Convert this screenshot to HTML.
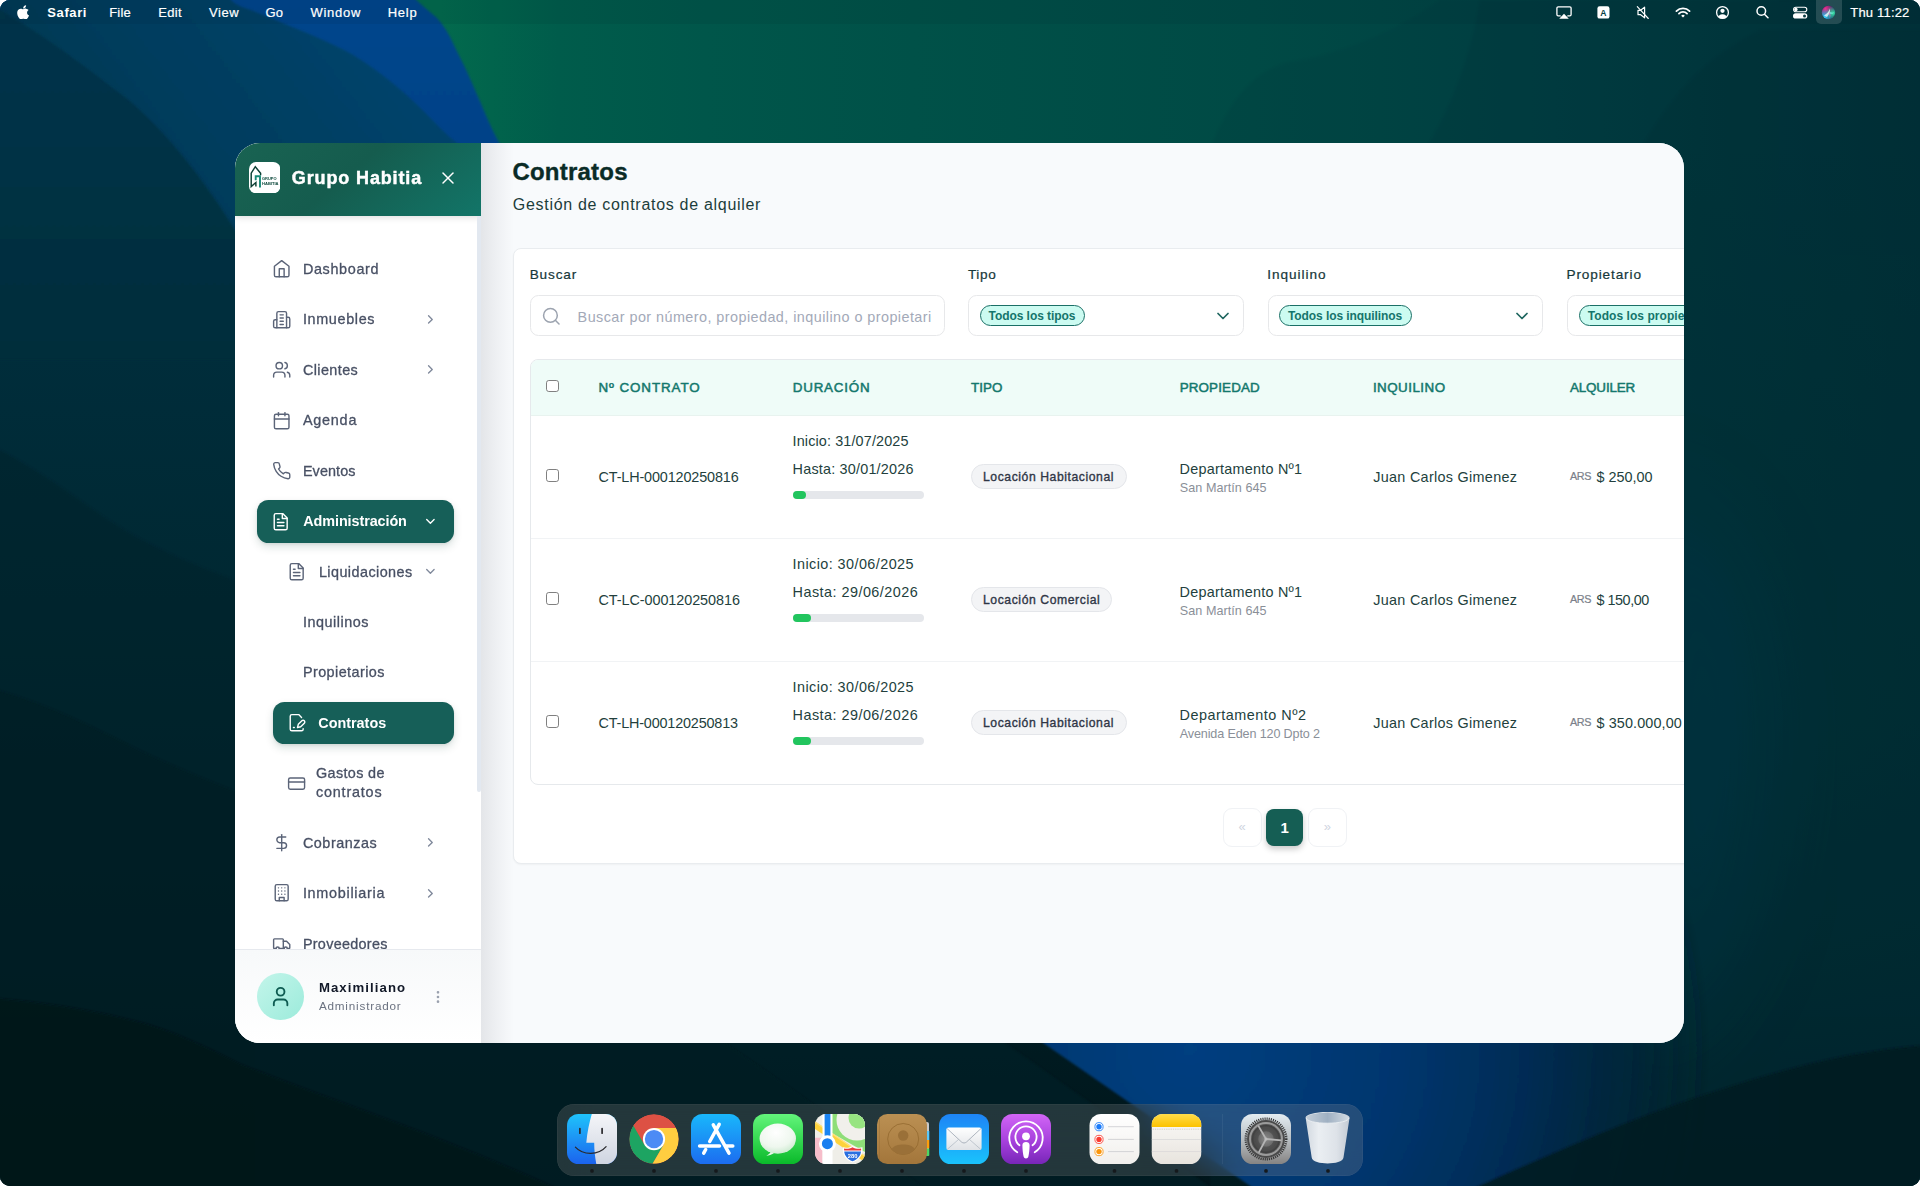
<!DOCTYPE html>
<html lang="es">
<head>
<meta charset="utf-8">
<title>Contratos - Grupo Habitia</title>
<style>
*{box-sizing:border-box;margin:0;padding:0}
html,body{width:1920px;height:1186px;overflow:hidden;background:#fff}
body{font-family:"Liberation Sans",sans-serif;-webkit-font-smoothing:antialiased}
#desk{position:absolute;left:0;top:0;width:1920px;height:1186px;overflow:hidden;border-radius:10px;background:#00252d}
#wall{position:absolute;left:0;top:0;width:1920px;height:1186px;display:block}
.abs{position:absolute}
/* ---------- menu bar ---------- */
#menubar{position:absolute;left:0;top:0;width:1920px;height:24px;background:rgba(0,20,30,.07);color:#fff;font-size:13px}
#menubar span.m{position:absolute;top:0;height:24px;line-height:25px;white-space:nowrap;font-weight:400;letter-spacing:.1px}
#menubar svg{position:absolute}
/* ---------- window ---------- */
#win{position:absolute;left:235px;top:143px;width:1449px;height:900px;border-radius:25px;overflow:hidden;background:#f8fafc}
/* ---------- dock ---------- */
#dock{position:absolute;left:557px;top:1104px;width:806px;height:72px;border-radius:17px;background:rgba(175,165,160,.20);-webkit-backdrop-filter:blur(18px);backdrop-filter:blur(18px);box-shadow:inset 0 0 0 .5px rgba(255,255,255,.08)}

.t{position:absolute;white-space:nowrap;display:block;font-weight:400;text-decoration:none;margin:0}
/* sidebar */
#side{position:absolute;left:0;top:0;width:246px;height:900px;background:#fff;overflow:hidden;z-index:2;opacity:.999}
#shead{position:absolute;left:0;top:0;width:246px;height:73px;background:linear-gradient(140deg,#196352 0%,#155c4e 45%,#127568 100%);box-shadow:0 2px 6px rgba(0,0,0,.12)}
#side nav{position:absolute;left:0;top:0;width:246px;height:807px;overflow:hidden}
#side .act{border-radius:11.5px;background:#165f58;box-shadow:0 4px 8px rgba(10,60,50,.15),0 1px 3px rgba(0,0,0,.08)}
#sfoot{position:absolute;left:0;top:806px;width:246px;height:94px;border-top:1px solid #e6e9ee;background:linear-gradient(180deg,#f7f9fa,#ffffff)}
/* main */
#main{position:absolute;left:0;top:0;width:1449px;height:900px;background:#f8fafc;overflow:hidden}
#mshadow{position:absolute;left:246px;top:0;width:33px;height:900px;background:linear-gradient(90deg,rgba(10,12,30,.088),rgba(10,12,30,.045) 45%,rgba(10,12,30,0))}
#card{position:absolute;left:278px;top:105px;width:1545px;height:615.5px;border:1px solid #e9ecef;border-radius:8px;background:#fff;box-shadow:0 1px 2px rgba(0,0,0,.04)}
#tbl{width:1511px;height:426px;border:1px solid #e6e9ec;border-radius:8px;overflow:hidden;background:#fff}
#thead{position:absolute;left:0;top:0;width:1511px;height:55.5px;background:#effcf8;border-bottom:1px solid #e8f3ef}
</style>
</head>
<body>
<div id="desk">
<svg id="wall" width="1920" height="1186" viewBox="0 0 1920 1186">
<defs>
<linearGradient id="gBase" x1="0" y1="0" x2="0" y2="1186" gradientUnits="userSpaceOnUse">
<stop offset="0" stop-color="#00344b"/><stop offset=".12" stop-color="#003246"/><stop offset=".3" stop-color="#002d3b"/><stop offset=".55" stop-color="#002730"/><stop offset=".8" stop-color="#001e25"/><stop offset="1" stop-color="#00151a"/>
</linearGradient>
<linearGradient id="gGreen" x1="440" y1="0" x2="1920" y2="0" gradientUnits="userSpaceOnUse">
<stop offset="0" stop-color="#036a4d"/><stop offset=".035" stop-color="#01644c"/><stop offset=".08" stop-color="#005c4b"/><stop offset=".18" stop-color="#00564a"/><stop offset=".32" stop-color="#005148"/><stop offset=".55" stop-color="#004a45"/><stop offset=".72" stop-color="#004243"/><stop offset=".85" stop-color="#003a3f"/><stop offset="1" stop-color="#003238"/>
</linearGradient>
<linearGradient id="gRightV" x1="0" y1="0" x2="0" y2="1">
<stop offset="0" stop-color="#00262c" stop-opacity="0"/><stop offset=".12" stop-color="#00262c" stop-opacity="0"/><stop offset=".6" stop-color="#00262c" stop-opacity=".5"/><stop offset=".86" stop-color="#00222a" stop-opacity=".9"/><stop offset="1" stop-color="#001c22" stop-opacity="1"/>
</linearGradient>
<linearGradient id="gBlueTop" x1="0" y1="0" x2="0" y2="150" gradientUnits="userSpaceOnUse">
<stop offset="0" stop-color="#03458c"/><stop offset="1" stop-color="#034388"/>
</linearGradient>
<linearGradient id="gMid" x1="90" y1="190" x2="330" y2="10" gradientUnits="userSpaceOnUse">
<stop offset="0" stop-color="#003852"/><stop offset=".45" stop-color="#013d5e"/><stop offset="1" stop-color="#01436a"/>
</linearGradient>
<radialGradient id="gBlueBot" cx="1190" cy="1050" r="520" gradientUnits="userSpaceOnUse">
<stop offset="0" stop-color="#023f80"/><stop offset=".4" stop-color="#02366e"/><stop offset=".65" stop-color="#012c54"/><stop offset=".85" stop-color="#01253c" stop-opacity=".75"/><stop offset="1" stop-color="#00222c" stop-opacity="0"/>
</radialGradient>
<radialGradient id="gGlow" cx="520" cy="130" r="260" gradientUnits="userSpaceOnUse">
<stop offset="0" stop-color="#036c4c" stop-opacity=".9"/><stop offset="1" stop-color="#036c4c" stop-opacity="0"/>
</radialGradient>
<filter id="b2" x="-5%" y="-5%" width="110%" height="110%"><feGaussianBlur stdDeviation="1"/></filter>
<filter id="b30" x="-50%" y="-50%" width="200%" height="200%"><feGaussianBlur stdDeviation="40"/></filter>
</defs>
<rect width="1920" height="1186" fill="url(#gBase)"/>
<!-- green / teal field (top + right) -->
<path d="M400 -10H1930V1200H1500V300H400Z" fill="url(#gGreen)"/>

<rect x="1500" y="0" width="430" height="1200" fill="url(#gRightV)"/>
<path d="M1640 480C1760 520 1800 700 1750 900C1730 980 1700 1010 1640 1060Z" fill="#003c55" opacity=".5" filter="url(#b30)"/>
<!-- subtle shapes top right -->
<path d="M1210 150C1225 110 1250 70 1290 62C1340 55 1400 30 1440 0H1930V1200H1210Z" fill="#00343c" opacity=".16" filter="url(#b2)"/>
<path d="M1425 150C1450 110 1470 60 1480 0H1930V1200H1425Z" fill="#002f38" opacity=".2" filter="url(#b2)"/>
<path d="M1600 1200C1600 700 1590 300 1640 150C1670 100 1700 60 1760 30H1930V1200Z" fill="#002a32" opacity=".22" filter="url(#b2)"/>
<!-- top-left layers -->
<path d="M-10 -10H406C420 4 430 12 437 18C444 26 449 34 453 43C458 54 463 63 468 74C474 88 480 101 485 113C490 125 495 135 501 146C512 170 530 210 560 300V330H-10Z" fill="url(#gBlueTop)" filter="url(#b2)"/>
<path d="M-10 -10H225C230 2 236 4 242 7C260 13 276 20 292 27C310 34 326 41 342 49C356 56 369 65 381 74C392 82 402 91 412 100C422 109 431 119 440 128C446 134 452 139 458 144C480 170 520 230 560 330H-10Z" fill="url(#gMid)" filter="url(#b2)"/>
<path d="M-10 4C22 21 72 56 114 89C150 114 195 165 235 230C260 270 290 310 330 360H-10Z" fill="url(#gBase)" filter="url(#b2)"/>
<!-- left waves -->
<path d="M-10 445C40 470 75 498 110 521C150 547 195 566 250 586C500 680 800 900 1300 1250H-10Z" fill="#00232b" opacity=".5" filter="url(#b2)"/>
<path d="M-10 688C45 704 80 721 118 740C160 761 200 778 250 797C450 870 700 1000 1000 1250H-10Z" fill="#001a20" opacity=".55" filter="url(#b2)"/>
<path d="M-10 998C50 1003 95 1011 135 1021C175 1031 210 1049 240 1064C330 1100 440 1135 560 1190H-10Z" fill="#001216" opacity=".7" filter="url(#b2)"/>
<!-- bottom band -->
<path d="M1036 1038L1256 1190H1930V900H1500V1038Z" fill="url(#gBlueBot)" filter="url(#b2)"/>
<path d="M1470 1190C1560 1150 1640 1115 1720 1090C1800 1064 1860 1050 1930 1045V1190Z" fill="#001a20" opacity=".9" filter="url(#b2)"/>
</svg>

<div id="menubar">
<svg class="abs" style="left:17.4px;top:4.6px" width="12.2" height="14.6" viewBox="0 24 384 464"><path fill="#fff" d="M318.7 268.7c-.2-36.700 16.400-64.400 50-84.800-18.800-26.900-47.200-41.700-84.700-44.600-35.500-2.800-74.300 20.700-88.500 20.700-15 0-49.400-19.700-76.400-19.700C63.300 141.200 4 184.800 4 273.500q0 39.300 14.400 81.200c12.800 36.700 59 126.700 107.200 125.200 25.200-.6 43-17.900 75.800-17.900 31.800 0 48.300 17.900 76.400 17.900 48.600-.7 90.400-82.500 102.600-119.300-65.200-30.700-61.700-90-61.700-91.900zm-56.600-164.200c27.300-32.400 24.800-61.900 24-72.500-24.100 1.400-52 16.400-67.900 34.900-17.500 19.800-27.800 44.300-25.600 71.900 26.100 2 49.900-11.400 69.500-34.300z"/></svg>
<span class="t" style="left:47.3px;top:4px;font-size:13px;line-height:17px;color:#fff;font-weight:700;letter-spacing:0.61px;">Safari</span>
<span class="t" style="left:109.2px;top:4px;font-size:13px;line-height:17px;color:#fff;letter-spacing:0.18px;-webkit-text-stroke:.2px #fff;">File</span>
<span class="t" style="left:158.2px;top:4px;font-size:13px;line-height:17px;color:#fff;letter-spacing:0.36px;-webkit-text-stroke:.2px #fff;">Edit</span>
<span class="t" style="left:208.9px;top:4px;font-size:13px;line-height:17px;color:#fff;letter-spacing:0.62px;-webkit-text-stroke:.2px #fff;">View</span>
<span class="t" style="left:265.4px;top:4px;font-size:13px;line-height:17px;color:#fff;letter-spacing:0.36px;-webkit-text-stroke:.2px #fff;">Go</span>
<span class="t" style="left:310.4px;top:4px;font-size:13px;line-height:17px;color:#fff;letter-spacing:0.75px;-webkit-text-stroke:.2px #fff;">Window</span>
<span class="t" style="left:387.7px;top:4px;font-size:13px;line-height:17px;color:#fff;letter-spacing:0.75px;-webkit-text-stroke:.2px #fff;">Help</span>
<span class="t" style="left:1850.3px;top:4px;font-size:13px;line-height:17px;color:#fff;letter-spacing:0.18px;-webkit-text-stroke:.2px #fff;">Thu 11:22</span>
<svg class="abs" style="left:1555px;top:5px" width="18" height="15" viewBox="0 0 18 15" fill="none"><path d="M5.2 10.9H3.2A1.3 1.3 0 0 1 1.9 9.600V3.100A1.300 1.300 0 0 1 3.200 1.800H14.800A1.300 1.300 0 0 1 16.100 3.100V9.600A1.300 1.300 0 0 1 14.800 10.900H12.800" stroke="#fff" stroke-width="1.3" stroke-linecap="round"/><path d="M9 8.700 13.800 13.800H4.200Z" fill="#fff"/></svg>
<svg class="abs" style="left:1596.5px;top:5.800px" width="13" height="13" viewBox="0 0 13 13"><rect x=".4" y=".3" width="12.100" height="12.300" rx="2.200" fill="#fff"/><text x="6.45" y="9.800" text-anchor="middle" font-family="Liberation Sans, sans-serif" font-weight="700" font-size="8.600" fill="#063f46">A</text></svg>
<svg class="abs" style="left:1635px;top:5px" width="16" height="15" viewBox="0 0 16 15" fill="none" stroke="#fff" stroke-linejoin="round" stroke-linecap="round"><path d="M9.600 2.200 5.600 5.300H3v4.400h2.600l4 3.100Z" stroke-width="1.200"/><path d="M2.300 1.700 13.300 13.500" stroke-width="1.100"/></svg>
<svg class="abs" style="left:1675.2px;top:6.700px" width="16" height="11.300" viewBox="0 0 17 12" fill="none" stroke="#fff" stroke-width="1.900" stroke-linecap="round"><path d="M1.500 4.300A10 10 0 0 1 15.500 4.300"/><path d="M4.200 7A6.200 6.200 0 0 1 12.800 7"/><path d="M8.500 11.200 6.600 9.300A2.700 2.700 0 0 1 10.400 9.300Z" fill="#fff" stroke="none"/></svg>
<svg class="abs" style="left:1714.700px;top:5px" width="15" height="15" viewBox="0 0 15 15" fill="none"><defs><clipPath id="ucl"><circle cx="7.500" cy="7.500" r="5.900"/></clipPath></defs><circle cx="7.500" cy="7.500" r="5.900" stroke="#fff" stroke-width="1.300"/><circle cx="7.500" cy="5.800" r="2.150" fill="#fff"/><ellipse cx="7.500" cy="13" rx="4.700" ry="3.700" fill="#fff" clip-path="url(#ucl)"/></svg>
<svg class="abs" style="left:1754.800px;top:4.900px" width="15" height="15" viewBox="0 0 15 15" fill="none" stroke="#fff" stroke-width="1.500" stroke-linecap="round"><circle cx="6.300" cy="6" r="4.300"/><path d="M9.500 9.200 13 12.700"/></svg>
<svg class="abs" style="left:1792px;top:5.500px" width="16" height="14" viewBox="0 0 16 14" fill="none"><rect x="1.600" y="1.300" width="13.200" height="4.500" rx="2.250" stroke="#fff" stroke-width="1.100"/><circle cx="3.900" cy="3.550" r="1.700" fill="#fff"/><rect x="1" y="7.300" width="14.300" height="5.300" rx="2.650" fill="#fff"/><circle cx="12.500" cy="9.950" r="1.500" fill="#0b3b42"/></svg>
<div class="abs" style="left:1816px;top:0;width:26px;height:23.500px;border-radius:0 0 5px 5px;background:rgba(255,255,255,.14)"></div>
<svg class="abs" style="left:1821px;top:4.600px" width="15" height="15" viewBox="0 0 15 15"><defs><radialGradient id="si1" cx=".3" cy=".25" r=".6"><stop offset="0" stop-color="#f0308f"/><stop offset="1" stop-color="#ff3fa0" stop-opacity="0"/></radialGradient><radialGradient id="si2" cx=".25" cy=".8" r=".55"><stop offset="0" stop-color="#35d6ff"/><stop offset="1" stop-color="#35d6ff" stop-opacity="0"/></radialGradient><radialGradient id="si3" cx=".8" cy=".55" r=".5"><stop offset="0" stop-color="#38e6a6"/><stop offset="1" stop-color="#38e6a6" stop-opacity="0"/></radialGradient><clipPath id="sic"><circle cx="7.500" cy="7.500" r="6.700"/></clipPath></defs><circle cx="7.500" cy="7.500" r="6.700" fill="#1a1a55"/><g clip-path="url(#sic)"><rect width="15" height="15" fill="url(#si1)"/><rect width="15" height="15" fill="url(#si2)"/><rect width="15" height="15" fill="url(#si3)"/><path d="M3 10.500C6 8.500 8 6.500 9 3.500C9.300 6.500 8.500 9 6 12Z" fill="#fff" opacity=".75"/><path d="M8.500 7C10 7.500 11.500 8 13 7.600C11.500 8.800 10 9 8.500 8.500Z" fill="#9ff" opacity=".7"/><path d="M7.700 8C8.500 10 9 11.500 8.600 13.500C9.800 11.500 9.500 9.500 8.800 7.800Z" fill="#f6c" opacity=".7"/></g></svg>
</div>

<div id="win">
<aside id="side">
<div id="shead"></div>
<svg class="abs" style="left:14px;top:19px" width="31.4" height="31.4" viewBox="0 0 31.4 31.4"><rect width="31.4" height="31.4" rx="7.200" fill="#fff"/><path d="M11.600 13.300V11.200L6.300 4.700 2.200 11.200V24.600L6.900 20.500V24.600" fill="none" stroke="#0c3f34" stroke-width="1.450" stroke-linejoin="miter"/><path d="M6.700 18.200V14.300H11V25.500" fill="none" stroke="#1a8a78" stroke-width="1.900"/><text x="13" y="17.750" font-family="Liberation Sans, sans-serif" font-weight="700" font-size="3.500" fill="#0e4a3d" textLength="14.600" lengthAdjust="spacingAndGlyphs">GRUPO</text><text x="13" y="23" font-family="Liberation Sans, sans-serif" font-weight="700" font-size="3.600" fill="#0e4a3d" textLength="16.600" lengthAdjust="spacingAndGlyphs">HABITIA</text></svg>
<div class="t" style="left:56.8px;top:24px;font-size:18px;line-height:23px;color:#fff;font-weight:700;letter-spacing:0.87px;-webkit-text-stroke:.45px #fff;">Grupo Habitia</div>
<svg class="abs" style="left:203.1px;top:24.5px" width="20" height="20" viewBox="0 0 24 24" fill="none" stroke="#fff" stroke-width="1.8" stroke-linecap="round" stroke-linejoin="round"><path d="M18 6 6 18"/><path d="m6 6 12 12"/></svg>
<nav>
<div class="abs" style="left:242.100px;top:73px;width:3.900px;height:576.300px;background:#e2e8f0;border-radius:0 0 2px 2px"></div>
<div class="abs act" style="left:22px;top:357px;width:197px;height:42.800px"></div>
<div class="abs act" style="left:37.500px;top:559px;width:181.500px;height:42.300px"></div>
<svg class="abs" style="left:36.7px;top:116.2px" width="19.4" height="19.4" viewBox="0 0 24 24" fill="none" stroke="#5b6478" stroke-width="1.75" stroke-linecap="round" stroke-linejoin="round"><path d="m3 9 9-7 9 7v11a2 2 0 0 1-2 2H5a2 2 0 0 1-2-2z"/><polyline points="9 22 9 12 15 12 15 22"/></svg>
<a class="t" style="left:67.9px;top:117px;font-size:14.4px;line-height:19px;color:#485064;letter-spacing:0.65px;-webkit-text-stroke:.3px #485064;">Dashboard</a>
<svg class="abs" style="left:36.7px;top:166.6px" width="19.4" height="19.4" viewBox="0 0 24 24" fill="none" stroke="#5b6478" stroke-width="1.75" stroke-linecap="round" stroke-linejoin="round"><path d="M6 22V4a2 2 0 0 1 2-2h8a2 2 0 0 1 2 2v18Z"/><path d="M6 12H4a2 2 0 0 0-2 2v6a2 2 0 0 0 2 2h2"/><path d="M18 9h2a2 2 0 0 1 2 2v9a2 2 0 0 1-2 2h-2"/><path d="M10 6h4"/><path d="M10 10h4"/><path d="M10 14h4"/><path d="M10 18h4"/></svg>
<a class="t" style="left:67.9px;top:167px;font-size:14.4px;line-height:19px;color:#485064;letter-spacing:0.65px;-webkit-text-stroke:.3px #485064;">Inmuebles</a>
<svg class="abs" style="left:188.1px;top:168.9px" width="14.8" height="14.8" viewBox="0 0 24 24" fill="none" stroke="#818a9c" stroke-width="2.2" stroke-linecap="round" stroke-linejoin="round"><path d="m9 18 6-6-6-6"/></svg>
<svg class="abs" style="left:36.7px;top:217.1px" width="19.4" height="19.4" viewBox="0 0 24 24" fill="none" stroke="#5b6478" stroke-width="1.75" stroke-linecap="round" stroke-linejoin="round"><path d="M16 21v-2a4 4 0 0 0-4-4H6a4 4 0 0 0-4 4v2"/><circle cx="9" cy="7" r="4"/><path d="M22 21v-2a4 4 0 0 0-3-3.87"/><path d="M16 3.13a4 4 0 0 1 0 7.75"/></svg>
<a class="t" style="left:67.9px;top:218px;font-size:14.4px;line-height:19px;color:#485064;letter-spacing:0.41px;-webkit-text-stroke:.3px #485064;">Clientes</a>
<svg class="abs" style="left:188.1px;top:219.4px" width="14.8" height="14.8" viewBox="0 0 24 24" fill="none" stroke="#818a9c" stroke-width="2.2" stroke-linecap="round" stroke-linejoin="round"><path d="m9 18 6-6-6-6"/></svg>
<svg class="abs" style="left:36.7px;top:267.6px" width="19.4" height="19.4" viewBox="0 0 24 24" fill="none" stroke="#5b6478" stroke-width="1.75" stroke-linecap="round" stroke-linejoin="round"><rect width="18" height="18" x="3" y="4" rx="2" ry="2"/><line x1="16" x2="16" y1="2" y2="6"/><line x1="8" x2="8" y1="2" y2="6"/><line x1="3" x2="21" y1="10" y2="10"/></svg>
<a class="t" style="left:67.9px;top:268px;font-size:14.4px;line-height:19px;color:#485064;letter-spacing:0.78px;-webkit-text-stroke:.3px #485064;">Agenda</a>
<svg class="abs" style="left:36.7px;top:318.1px" width="19.4" height="19.4" viewBox="0 0 24 24" fill="none" stroke="#5b6478" stroke-width="1.75" stroke-linecap="round" stroke-linejoin="round"><path d="M22 16.92v3a2 2 0 0 1-2.18 2 19.79 19.79 0 0 1-8.63-3.07 19.5 19.5 0 0 1-6-6 19.79 19.79 0 0 1-3.07-8.67A2 2 0 0 1 4.11 2h3a2 2 0 0 1 2 1.72 12.84 12.84 0 0 0 .7 2.81 2 2 0 0 1-.45 2.11L8.09 9.91a16 16 0 0 0 6 6l1.27-1.27a2 2 0 0 1 2.11-.45 12.84 12.84 0 0 0 2.81.7A2 2 0 0 1 22 16.92z"/></svg>
<a class="t" style="left:67.9px;top:319px;font-size:14.4px;line-height:19px;color:#485064;letter-spacing:0.10px;-webkit-text-stroke:.3px #485064;">Eventos</a>
<svg class="abs" style="left:36.2px;top:368.5px" width="19.4" height="19.4" viewBox="0 0 24 24" fill="none" stroke="#fff" stroke-width="1.75" stroke-linecap="round" stroke-linejoin="round"><path d="M14.5 2H6a2 2 0 0 0-2 2v16a2 2 0 0 0 2 2h12a2 2 0 0 0 2-2V7.5L14.5 2z"/><polyline points="14 2 14 8 20 8"/><line x1="16" x2="8" y1="13" y2="13"/><line x1="16" x2="8" y1="17" y2="17"/><line x1="10" x2="8" y1="9" y2="9"/></svg>
<a class="t" style="left:68.3px;top:369px;font-size:14.4px;line-height:19px;color:#fff;font-weight:700;letter-spacing:-0.09px;">Administración</a>
<svg class="abs" style="left:188.1px;top:370.8px" width="14.8" height="14.8" viewBox="0 0 24 24" fill="none" stroke="#fff" stroke-width="2.2" stroke-linecap="round" stroke-linejoin="round"><path d="m6 9 6 6 6-6"/></svg>
<svg class="abs" style="left:52.3px;top:418.9px" width="19.4" height="19.4" viewBox="0 0 24 24" fill="none" stroke="#5b6478" stroke-width="1.75" stroke-linecap="round" stroke-linejoin="round"><path d="M14.5 2H6a2 2 0 0 0-2 2v16a2 2 0 0 0 2 2h12a2 2 0 0 0 2-2V7.5L14.5 2z"/><polyline points="14 2 14 8 20 8"/><line x1="16" x2="8" y1="13" y2="13"/><line x1="16" x2="8" y1="17" y2="17"/><line x1="10" x2="8" y1="9" y2="9"/></svg>
<a class="t" style="left:83.9px;top:420px;font-size:14.4px;line-height:19px;color:#485064;letter-spacing:0.44px;-webkit-text-stroke:.3px #485064;">Liquidaciones</a>
<svg class="abs" style="left:188.1px;top:421.2px" width="14.8" height="14.8" viewBox="0 0 24 24" fill="none" stroke="#818a9c" stroke-width="2.2" stroke-linecap="round" stroke-linejoin="round"><path d="m6 9 6 6 6-6"/></svg>
<a class="t" style="left:67.9px;top:470px;font-size:14.4px;line-height:19px;color:#485064;letter-spacing:0.53px;-webkit-text-stroke:.3px #485064;">Inquilinos</a>
<a class="t" style="left:67.9px;top:520px;font-size:14.4px;line-height:19px;color:#485064;letter-spacing:0.43px;-webkit-text-stroke:.3px #485064;">Propietarios</a>
<svg class="abs" style="left:52.3px;top:570.2px" width="19.4" height="19.4" viewBox="0 0 24 24" fill="none" stroke="#fff" stroke-width="1.75" stroke-linecap="round" stroke-linejoin="round"><path d="M20 19.5v.5a2 2 0 0 1-2 2H6a2 2 0 0 1-2-2V4a2 2 0 0 1 2-2h8.5L18 5.5"/><path d="M8 18h1"/><path d="M18.42 9.61a2.1 2.1 0 1 1 2.97 2.97L16.95 17 13 18l.99-3.95 4.43-4.44Z"/></svg>
<a class="t" style="left:83.3px;top:571px;font-size:14.4px;line-height:19px;color:#fff;font-weight:700;letter-spacing:-0.01px;">Contratos</a>
<svg class="abs" style="left:36.7px;top:689.8px" width="19.4" height="19.4" viewBox="0 0 24 24" fill="none" stroke="#5b6478" stroke-width="1.75" stroke-linecap="round" stroke-linejoin="round"><line x1="12" x2="12" y1="2" y2="22"/><path d="M17 5H9.5a3.5 3.5 0 0 0 0 7h5a3.5 3.5 0 0 1 0 7H6"/></svg>
<a class="t" style="left:67.9px;top:691px;font-size:14.4px;line-height:19px;color:#485064;letter-spacing:0.54px;-webkit-text-stroke:.3px #485064;">Cobranzas</a>
<svg class="abs" style="left:188.1px;top:692.1px" width="14.8" height="14.8" viewBox="0 0 24 24" fill="none" stroke="#818a9c" stroke-width="2.2" stroke-linecap="round" stroke-linejoin="round"><path d="m9 18 6-6-6-6"/></svg>
<svg class="abs" style="left:36.7px;top:740.3px" width="19.4" height="19.4" viewBox="0 0 24 24" fill="none" stroke="#5b6478" stroke-width="1.75" stroke-linecap="round" stroke-linejoin="round"><rect width="16" height="20" x="4" y="2" rx="2" ry="2"/><path d="M9 22v-4h6v4"/><path d="M8 6h.01"/><path d="M16 6h.01"/><path d="M12 6h.01"/><path d="M12 10h.01"/><path d="M12 14h.01"/><path d="M16 10h.01"/><path d="M16 14h.01"/><path d="M8 10h.01"/><path d="M8 14h.01"/></svg>
<a class="t" style="left:67.9px;top:741px;font-size:14.4px;line-height:19px;color:#485064;letter-spacing:0.72px;-webkit-text-stroke:.3px #485064;">Inmobiliaria</a>
<svg class="abs" style="left:188.1px;top:742.6px" width="14.8" height="14.8" viewBox="0 0 24 24" fill="none" stroke="#818a9c" stroke-width="2.2" stroke-linecap="round" stroke-linejoin="round"><path d="m9 18 6-6-6-6"/></svg>
<svg class="abs" style="left:36.7px;top:790.7px" width="19.4" height="19.4" viewBox="0 0 24 24" fill="none" stroke="#5b6478" stroke-width="1.75" stroke-linecap="round" stroke-linejoin="round"><path d="M5 18H3c-.6 0-1-.4-1-1V7c0-.6.4-1 1-1h10c.6 0 1 .4 1 1v11"/><path d="M14 9h4l4 4v4c0 .6-.4 1-1 1h-2"/><circle cx="7" cy="18" r="2"/><path d="M15 18H9"/><circle cx="17" cy="18" r="2"/></svg>
<a class="t" style="left:67.9px;top:792px;font-size:14.4px;line-height:19px;color:#485064;letter-spacing:0.29px;-webkit-text-stroke:.3px #485064;">Proveedores</a>
<svg class="abs" style="left:52.1px;top:630.9px" width="19.2" height="19.2" viewBox="0 0 24 24" fill="none" stroke="#5b6478" stroke-width="1.75" stroke-linecap="round" stroke-linejoin="round"><rect width="20" height="14" x="2" y="5" rx="2"/><line x1="2" x2="22" y1="10" y2="10"/></svg>
<a class="t" style="left:81.0px;top:621px;font-size:14.4px;line-height:19px;color:#485064;letter-spacing:0.35px;-webkit-text-stroke:.3px #485064;">Gastos de</a>
<a class="t" style="left:81.0px;top:640px;font-size:14.4px;line-height:19px;color:#485064;letter-spacing:0.80px;-webkit-text-stroke:.3px #485064;">contratos</a>
</nav>
<div id="sfoot"></div>
<div class="abs" style="left:22px;top:830px;width:46.600px;height:46.600px;border-radius:50%;background:linear-gradient(135deg,#c3f5ea,#9cebdb)"></div>
<svg class="abs" style="left:33.5px;top:841.8px" width="23.2" height="23.2" viewBox="0 0 24 24" fill="none" stroke="#0f5c52" stroke-width="1.93" stroke-linecap="round" stroke-linejoin="round"><path d="M19 21v-2a4 4 0 0 0-4-4H9a4 4 0 0 0-4 4v2"/><circle cx="12" cy="7" r="4"/></svg>
<div class="t" style="left:83.9px;top:836px;font-size:13.2px;line-height:17px;color:#111827;font-weight:700;letter-spacing:1.07px;">Maximiliano</div>
<div class="t" style="left:83.9px;top:855px;font-size:11.7px;line-height:15px;color:#6b7280;letter-spacing:0.81px;">Administrador</div>
<svg class="abs" style="left:195.3px;top:845.7px" width="16" height="16" viewBox="0 0 24 24" fill="none" stroke="#9aa1ae" stroke-width="2" stroke-linecap="round" stroke-linejoin="round"><circle cx="12" cy="12" r="1"/><circle cx="12" cy="5" r="1"/><circle cx="12" cy="19" r="1"/></svg>
</aside>

<main id="main">
<div id="mshadow"></div>
<h1 class="t" style="left:277.4px;top:13px;font-size:24px;line-height:31px;color:#0a2b26;font-weight:700;letter-spacing:0.23px;-webkit-text-stroke:.35px #0a2b26;">Contratos</h1>
<p class="t" style="left:277.8px;top:51px;font-size:16px;line-height:21px;color:#1c3d3b;letter-spacing:0.70px;">Gestión de contratos de alquiler</p>
<section id="card">
<label class="t" style="left:15.7px;top:17px;font-size:13.6px;line-height:18px;color:#17383a;letter-spacing:0.86px;-webkit-text-stroke:.22px #17383a;">Buscar</label>
<label class="t" style="left:453.9px;top:17px;font-size:13.6px;line-height:18px;color:#17383a;letter-spacing:0.68px;-webkit-text-stroke:.22px #17383a;">Tipo</label>
<label class="t" style="left:753.3px;top:17px;font-size:13.6px;line-height:18px;color:#17383a;letter-spacing:0.94px;-webkit-text-stroke:.22px #17383a;">Inquilino</label>
<label class="t" style="left:1052.5px;top:17px;font-size:13.6px;line-height:18px;color:#17383a;letter-spacing:0.87px;-webkit-text-stroke:.22px #17383a;">Propietario</label>
<div class="abs inp" style="left:15.8px;top:46.2px;width:414.8px;height:40.5px;border:1px solid #e7e8ea;border-radius:8.5px;background:#fff"></div>
<svg class="abs" style="left:26.7px;top:56.7px" width="20.6" height="20.6" viewBox="0 0 24 24" fill="none" stroke="#9ca3af" stroke-width="1.75" stroke-linecap="round" stroke-linejoin="round"><circle cx="11" cy="11" r="8"/><path d="m21 21-4.3-4.3"/></svg>
<div class="abs" style="left:63.0px;top:51.0px;width:354.5px;height:31.0px;overflow:hidden"><span class="t" style="left:0.6px;top:8px;font-size:14.4px;line-height:19px;color:#a3a9b8;letter-spacing:0.44px;">Buscar por número, propiedad, inquilino o propietario</span></div>
<div class="abs inp" style="left:454.2px;top:46.2px;width:275.6px;height:40.5px;border:1px solid #e7e8ea;border-radius:8.5px;background:#fff"></div>
<div class="abs" style="left:466.0px;top:56.0px;width:105.0px;height:21.2px;border:1.200px solid #1a6f66;border-radius:11px;background:#ccfbf1"></div>
<span class="t" style="left:474.6px;top:59px;font-size:12px;line-height:16px;color:#15756b;font-weight:700;letter-spacing:-0.07px;">Todos los tipos</span>
<svg class="abs" style="left:698.9px;top:56.6px" width="20" height="20" viewBox="0 0 24 24" fill="none" stroke="#1f665f" stroke-width="2.1" stroke-linecap="round" stroke-linejoin="round"><path d="m6 9 6 6 6-6"/></svg>
<div class="abs inp" style="left:753.6px;top:46.2px;width:275.6px;height:40.5px;border:1px solid #e7e8ea;border-radius:8.5px;background:#fff"></div>
<div class="abs" style="left:765.4px;top:56.0px;width:132.5px;height:21.2px;border:1.200px solid #1a6f66;border-radius:11px;background:#ccfbf1"></div>
<span class="t" style="left:774.0px;top:59px;font-size:12px;line-height:16px;color:#15756b;font-weight:700;letter-spacing:-0.08px;">Todos los inquilinos</span>
<svg class="abs" style="left:998.3px;top:56.6px" width="20" height="20" viewBox="0 0 24 24" fill="none" stroke="#1f665f" stroke-width="2.1" stroke-linecap="round" stroke-linejoin="round"><path d="m6 9 6 6 6-6"/></svg>
<div class="abs inp" style="left:1053.4px;top:46.2px;width:275.6px;height:40.5px;border:1px solid #e7e8ea;border-radius:8.5px;background:#fff"></div>
<div class="abs" style="left:1065.2px;top:56.0px;width:147.7px;height:21.2px;border:1.200px solid #1a6f66;border-radius:11px;background:#ccfbf1"></div>
<span class="t" style="left:1073.8px;top:59px;font-size:12px;line-height:16px;color:#15756b;font-weight:700;letter-spacing:0.05px;">Todos los propietarios</span>
<svg class="abs" style="left:1298.1px;top:56.6px" width="20" height="20" viewBox="0 0 24 24" fill="none" stroke="#1f665f" stroke-width="2.1" stroke-linecap="round" stroke-linejoin="round"><path d="m6 9 6 6 6-6"/></svg>
<div id="tbl" class="abs" style="left:16.0px;top:110.0px">
<div id="thead"></div>
</div>
<div class="abs" style="left:32.0px;top:130.5px;width:13.0px;height:12.9px;border:1.150px solid #808080;border-radius:2.800px;background:#fff"></div>
<span class="t" style="left:84.4px;top:130px;font-size:13.4px;line-height:17px;color:#13786d;letter-spacing:0.91px;-webkit-text-stroke:.5px #13786d;">Nº CONTRATO</span>
<span class="t" style="left:278.7px;top:130px;font-size:13.4px;line-height:17px;color:#13786d;letter-spacing:0.80px;-webkit-text-stroke:.5px #13786d;">DURACIÓN</span>
<span class="t" style="left:456.9px;top:130px;font-size:13.4px;line-height:17px;color:#13786d;letter-spacing:0.12px;-webkit-text-stroke:.5px #13786d;">TIPO</span>
<span class="t" style="left:665.7px;top:130px;font-size:13.4px;line-height:17px;color:#13786d;letter-spacing:0.14px;-webkit-text-stroke:.5px #13786d;">PROPIEDAD</span>
<span class="t" style="left:858.9px;top:130px;font-size:13.4px;line-height:17px;color:#13786d;letter-spacing:0.47px;-webkit-text-stroke:.5px #13786d;">INQUILINO</span>
<span class="t" style="left:1055.9px;top:130px;font-size:13.4px;line-height:17px;color:#13786d;letter-spacing:-0.12px;-webkit-text-stroke:.5px #13786d;">ALQUILER</span>
<div class="abs" style="left:32.0px;top:220.0px;width:13.0px;height:12.9px;border:1.150px solid #808080;border-radius:2.800px;background:#fff"></div>
<span class="t" style="left:84.5px;top:219px;font-size:14.4px;line-height:19px;color:#233f3d;letter-spacing:-0.13px;">CT-LH-000120250816</span>
<span class="t" style="left:278.6px;top:183px;font-size:14.4px;line-height:19px;color:#233f3d;letter-spacing:0.13px;">Inicio: 31/07/2025</span>
<span class="t" style="left:278.6px;top:211px;font-size:14.4px;line-height:19px;color:#233f3d;letter-spacing:0.20px;">Hasta: 30/01/2026</span>
<div class="abs" style="left:279.0px;top:241.8px;width:131.2px;height:8.0px;border-radius:4px;background:#e5e7eb"><i style="display:block;width:13px;height:8px;border-radius:4px;background:#22c55e"></i></div>
<div class="abs" style="left:456.8px;top:215.0px;width:156.0px;height:25.0px;border:1px solid #e4e6ea;border-radius:12.5px;background:#f3f4f6"></div>
<span class="t" style="left:469.0px;top:220px;font-size:12.2px;line-height:16px;color:#2f3646;letter-spacing:0.56px;-webkit-text-stroke:.35px #2f3646;">Locación Habitacional</span>
<span class="t" style="left:665.6px;top:211px;font-size:14.4px;line-height:19px;color:#233f3d;letter-spacing:0.24px;">Departamento Nº1</span>
<span class="t" style="left:665.8px;top:231px;font-size:12.6px;line-height:16px;color:#8a8f98;letter-spacing:0.05px;">San Martín 645</span>
<span class="t" style="left:859.2px;top:219px;font-size:14.4px;line-height:19px;color:#233f3d;letter-spacing:0.30px;">Juan Carlos Gimenez</span>
<span class="t" style="left:1056.0px;top:220px;font-size:10.8px;line-height:14px;color:#7b7f8a;letter-spacing:-0.40px;-webkit-text-stroke:.2px #7b7f8a;">ARS</span>
<span class="t" style="left:1082.4px;top:219px;font-size:14.4px;line-height:19px;color:#233f3d;letter-spacing:0.02px;">$ 250,00</span>
<div class="abs" style="left:17.0px;top:288.7px;width:1500.0px;height:1.0px;background:#f1f3f5"></div>
<div class="abs" style="left:32.0px;top:343.0px;width:13.0px;height:12.9px;border:1.150px solid #808080;border-radius:2.800px;background:#fff"></div>
<span class="t" style="left:84.5px;top:342px;font-size:14.4px;line-height:19px;color:#233f3d;letter-spacing:-0.06px;">CT-LC-000120250816</span>
<span class="t" style="left:278.6px;top:306px;font-size:14.4px;line-height:19px;color:#233f3d;letter-spacing:0.43px;">Inicio: 30/06/2025</span>
<span class="t" style="left:278.6px;top:334px;font-size:14.4px;line-height:19px;color:#233f3d;letter-spacing:0.47px;">Hasta: 29/06/2026</span>
<div class="abs" style="left:279.0px;top:364.8px;width:131.2px;height:8.0px;border-radius:4px;background:#e5e7eb"><i style="display:block;width:18px;height:8px;border-radius:4px;background:#22c55e"></i></div>
<div class="abs" style="left:456.8px;top:338.0px;width:141.3px;height:25.0px;border:1px solid #e4e6ea;border-radius:12.5px;background:#f3f4f6"></div>
<span class="t" style="left:469.0px;top:343px;font-size:12.2px;line-height:16px;color:#2f3646;letter-spacing:0.57px;-webkit-text-stroke:.35px #2f3646;">Locación Comercial</span>
<span class="t" style="left:665.6px;top:334px;font-size:14.4px;line-height:19px;color:#233f3d;letter-spacing:0.24px;">Departamento Nº1</span>
<span class="t" style="left:665.8px;top:354px;font-size:12.6px;line-height:16px;color:#8a8f98;letter-spacing:0.05px;">San Martín 645</span>
<span class="t" style="left:859.2px;top:342px;font-size:14.4px;line-height:19px;color:#233f3d;letter-spacing:0.30px;">Juan Carlos Gimenez</span>
<span class="t" style="left:1056.0px;top:343px;font-size:10.8px;line-height:14px;color:#7b7f8a;letter-spacing:-0.40px;-webkit-text-stroke:.2px #7b7f8a;">ARS</span>
<span class="t" style="left:1082.4px;top:342px;font-size:14.4px;line-height:19px;color:#233f3d;letter-spacing:-0.45px;">$ 150,00</span>
<div class="abs" style="left:17.0px;top:411.7px;width:1500.0px;height:1.0px;background:#f1f3f5"></div>
<div class="abs" style="left:32.0px;top:466.0px;width:13.0px;height:12.9px;border:1.150px solid #808080;border-radius:2.800px;background:#fff"></div>
<span class="t" style="left:84.5px;top:465px;font-size:14.4px;line-height:19px;color:#233f3d;letter-spacing:-0.17px;">CT-LH-000120250813</span>
<span class="t" style="left:278.6px;top:429px;font-size:14.4px;line-height:19px;color:#233f3d;letter-spacing:0.43px;">Inicio: 30/06/2025</span>
<span class="t" style="left:278.6px;top:457px;font-size:14.4px;line-height:19px;color:#233f3d;letter-spacing:0.47px;">Hasta: 29/06/2026</span>
<div class="abs" style="left:279.0px;top:487.8px;width:131.2px;height:8.0px;border-radius:4px;background:#e5e7eb"><i style="display:block;width:18px;height:8px;border-radius:4px;background:#22c55e"></i></div>
<div class="abs" style="left:456.8px;top:461.0px;width:156.0px;height:25.0px;border:1px solid #e4e6ea;border-radius:12.5px;background:#f3f4f6"></div>
<span class="t" style="left:469.0px;top:466px;font-size:12.2px;line-height:16px;color:#2f3646;letter-spacing:0.56px;-webkit-text-stroke:.35px #2f3646;">Locación Habitacional</span>
<span class="t" style="left:665.6px;top:457px;font-size:14.4px;line-height:19px;color:#233f3d;letter-spacing:0.50px;">Departamento Nº2</span>
<span class="t" style="left:665.8px;top:477px;font-size:12.6px;line-height:16px;color:#8a8f98;letter-spacing:-0.14px;">Avenida Eden 120 Dpto 2</span>
<span class="t" style="left:859.2px;top:465px;font-size:14.4px;line-height:19px;color:#233f3d;letter-spacing:0.30px;">Juan Carlos Gimenez</span>
<span class="t" style="left:1056.0px;top:466px;font-size:10.8px;line-height:14px;color:#7b7f8a;letter-spacing:-0.40px;-webkit-text-stroke:.2px #7b7f8a;">ARS</span>
<span class="t" style="left:1082.4px;top:465px;font-size:14.4px;line-height:19px;color:#233f3d;letter-spacing:0.13px;">$ 350.000,00</span>
<div class="abs" style="left:709.2px;top:559.2px;width:38.4px;height:38.4px;border:1px solid #f0f2f5;border-radius:9px;background:#fff"></div>
<div class="abs" style="left:794.3px;top:559.2px;width:38.4px;height:38.4px;border:1px solid #f0f2f5;border-radius:9px;background:#fff"></div>
<div class="abs" style="left:752.4px;top:560.2px;width:36.8px;height:36.6px;border-radius:8px;background:#155e54;box-shadow:0 3px 6px rgba(0,0,0,.22)"></div>
<span class="t" style="left:724.6px;top:569px;font-size:13px;line-height:17px;color:#cfd5df;">«</span>
<span class="t" style="left:809.8px;top:569px;font-size:13px;line-height:17px;color:#cfd5df;">»</span>
<span class="t" style="left:766.6px;top:569px;font-size:15px;line-height:20px;color:#fff;font-weight:700;">1</span>
</section>
</main>

</div>
<div id="dock"></div>
<div class="abs" style="left:1222px;top:1114px;width:1px;height:50px;background:rgba(255,255,255,.06)"></div>
<svg class="abs" style="left:557px;top:1104px" width="806" height="72" viewBox="557 1104 806 72">
<defs>
<linearGradient id="dFb" x1="0" y1="0" x2="0" y2="1"><stop offset="0" stop-color="#1fc3fb"/><stop offset="1" stop-color="#1b63ee"/></linearGradient>
<linearGradient id="dFw" x1="0" y1="0" x2="0" y2="1"><stop offset="0" stop-color="#f4f5f8"/><stop offset="1" stop-color="#cfd5e1"/></linearGradient>
<linearGradient id="dAs" x1="0" y1="0" x2="0" y2="1"><stop offset="0" stop-color="#19b7fb"/><stop offset="1" stop-color="#1c6cf0"/></linearGradient>
<linearGradient id="dMs" x1="0" y1="0" x2="0" y2="1"><stop offset="0" stop-color="#63f57b"/><stop offset="1" stop-color="#0aba2a"/></linearGradient>
<radialGradient id="dMb" cx=".45" cy=".3" r=".8"><stop offset="0" stop-color="#ffffff"/><stop offset=".6" stop-color="#eef7ee"/><stop offset="1" stop-color="#bfe6c4"/></radialGradient>
<linearGradient id="dCt" x1="0" y1="0" x2="0" y2="1"><stop offset="0" stop-color="#bb9053"/><stop offset="1" stop-color="#a3763b"/></linearGradient>
<linearGradient id="dMl" x1="0" y1="0" x2="0" y2="1"><stop offset="0" stop-color="#1e84f6"/><stop offset="1" stop-color="#1ac3fc"/></linearGradient>
<linearGradient id="dEn" x1="0" y1="0" x2="0" y2="1"><stop offset="0" stop-color="#ffffff"/><stop offset="1" stop-color="#dfe2e6"/></linearGradient>
<linearGradient id="dPc" x1="0" y1="0" x2="0" y2="1"><stop offset="0" stop-color="#d265f6"/><stop offset=".55" stop-color="#a540dc"/><stop offset="1" stop-color="#7826b8"/></linearGradient>
<linearGradient id="dRm" x1="0" y1="0" x2="0" y2="1"><stop offset="0" stop-color="#ffffff"/><stop offset="1" stop-color="#f1efec"/></linearGradient>
<linearGradient id="dNy" x1="0" y1="0" x2="0" y2="1"><stop offset="0" stop-color="#ffdc4a"/><stop offset="1" stop-color="#fcc200"/></linearGradient>
<linearGradient id="dNb" x1="0" y1="0" x2="0" y2="1"><stop offset="0" stop-color="#fbfaf8"/><stop offset="1" stop-color="#e8e4de"/></linearGradient>
<linearGradient id="dSp" x1="0" y1="0" x2="0" y2="1"><stop offset="0" stop-color="#e3ecf1"/><stop offset=".5" stop-color="#b9bfc3"/><stop offset="1" stop-color="#868483"/></linearGradient>
<radialGradient id="dSg" cx=".5" cy=".5" r=".5"><stop offset="0" stop-color="#8a8a8a"/><stop offset=".55" stop-color="#6a6a6a"/><stop offset="1" stop-color="#3c3c3c"/></radialGradient>
<linearGradient id="dTr" x1="0" y1="0" x2="1" y2="0"><stop offset="0" stop-color="#d9dee4"/><stop offset=".3" stop-color="#f3f5f7"/><stop offset=".7" stop-color="#e6e9ed"/><stop offset="1" stop-color="#c9cfd7"/></linearGradient>
<linearGradient id="dTi" x1="0" y1="0" x2="1" y2="0"><stop offset="0" stop-color="#c4ced9"/><stop offset=".5" stop-color="#9fb0c2"/><stop offset="1" stop-color="#d3dbe3"/></linearGradient>
<clipPath id="cpI"><rect x="0" y="0" width="50" height="50" rx="11.500"/></clipPath>
<clipPath id="cpC"><circle cx="0" cy="0" r="24.750"/></clipPath>
</defs>
<g transform="translate(567 1114)"><g clip-path="url(#cpI)"><rect width="50" height="50" fill="url(#dFb)"/><path d="M24.800 0C22.500 8 20.200 18 19.300 28.700H27.200C27.200 36 28 43 29.300 50H50V0Z" fill="url(#dFw)"/></g>
<path d="M12.900 14.600V19.200M35.100 14.600V19.200" stroke="#2a2a2e" stroke-width="1.700" stroke-linecap="round"/><path d="M8.400 33.100C16 41.500 31.500 41.500 39.100 32.700" stroke="#2a2a2e" stroke-width="1.250" fill="none" stroke-linecap="round"/></g>
<g transform="translate(654 1139.1)"><g clip-path="url(#cpC)"><circle r="24.750" fill="#dd5144"/><path d="M0 -11.10 H22.12 A24.75 24.75 0 0 0 -20.67 -13.61 L-9.61 5.55 Z" fill="#dd5144"/><path d="M0 -11.10 H22.12 A24.75 24.75 0 0 0 -20.67 -13.61 L-9.61 5.55 Z" fill="#1da462" transform="rotate(-120)"/><path d="M0 -11.10 H22.12 A24.75 24.75 0 0 0 -20.67 -13.61 L-9.61 5.55 Z" fill="#ffcd40" transform="rotate(120)"/></g><circle r="11.100" fill="#fff"/><circle r="9.200" fill="#4c8bf5"/></g>
<g transform="translate(691 1114)"><rect width="50" height="50" rx="11.500" fill="url(#dAs)"/><g stroke="#fff" stroke-width="3.500" stroke-linecap="round" fill="none"><path d="M22.300 10.800 38 39.200"/><path d="M28.200 10.300 18.700 27.500"/><path d="M14.700 35.500 12.700 39.200"/><path d="M8.600 32H28.500"/><path d="M34.500 32H41.800"/></g></g>
<g transform="translate(753 1114)"><rect width="50" height="50" rx="11.500" fill="url(#dMs)"/><path d="M13.300 41.700C15.800 40.800 17.300 39 17.900 37.300L22 38.600C18.500 40.800 15.500 41.700 13.300 41.700Z" fill="#eaf6ea"/><ellipse cx="24.800" cy="24.600" rx="18.200" ry="15.100" fill="url(#dMb)"/></g>
<g transform="translate(815 1114)"><g clip-path="url(#cpI)"><rect width="50" height="50" fill="#efeee8"/><path d="M17 0H50V38L36 30 22 22 17 19Z" fill="#8ede78"/><circle cx="42" cy="6" r="20.500" fill="#f1f0eb"/><circle cx="44" cy="4" r="10.500" fill="#97e481"/><path d="M0 23.800H7.500V50H0Z" fill="#f6bdca"/><path d="M-2 6 52 43V49.500L-2 13.600Z" fill="#fdd23c"/><path d="M-2 6.600 52 43.600" stroke="#ffe27a" stroke-width="1.200" fill="none"/><rect x="7.500" y="-1" width="10" height="52" fill="#fff"/><rect x="9.600" y="-1" width="5.800" height="26" fill="#1a84f2"/><circle cx="12.400" cy="29.700" r="8.500" fill="#fff"/><circle cx="12.400" cy="29.700" r="5.500" fill="#1a7ff0"/><g transform="translate(37.500 40.200) scale(1.130) translate(-37 -40.600)"><path d="M28.500 34.500C31 35.300 34 35 37 33.300 40 35 43 35.300 45.800 34.500 46.500 41 43.500 45.500 37 48 30.500 45.500 27.700 41 28.500 34.500Z" fill="#fff"/><path d="M29.700 38.200H44.500C44.300 41.800 41.800 45 37 46.800 32.300 45 30 41.800 29.700 38.200Z" fill="#2a6fe0"/><path d="M29.600 37.300C29.500 36.600 29.500 36 29.600 35.500 32 36 34.500 35.700 37 34.400 39.500 35.700 42 36 44.600 35.500 44.700 36 44.700 36.600 44.600 37.300Z" fill="#e8383d"/></g></g><text x="37.600" y="43.700" text-anchor="middle" font-family="Liberation Sans, sans-serif" font-weight="700" font-size="5.800" fill="#fff">280</text></g>
<g transform="translate(877 1114)"><rect x="44" y="8" width="8" height="34" rx="2" fill="#c9c9c9"/><rect x="46" y="17" width="6.300" height="9" fill="#5ac8fa"/><rect x="46" y="26" width="6.300" height="8.500" fill="#ff9f0a"/><rect x="46" y="34.500" width="6.300" height="7.500" rx="1" fill="#4cd964"/><rect width="50" height="50" rx="10.500" fill="url(#dCt)"/><path d="M2.600 3V47" stroke="#96692f" stroke-width=".8" opacity=".5"/><circle cx="26.200" cy="25" r="15.500" fill="none" stroke="#93692f" stroke-width=".9" opacity=".9"/><circle cx="26.200" cy="21.500" r="5.200" fill="#9a7038"/><path d="M14.500 35.200C17 31.500 21 30.500 26.200 30.500S35.500 31.500 38 35.200C35 38.700 31 40.500 26.200 40.500S17.500 38.700 14.500 35.200Z" fill="#9a7038"/></g>
<g transform="translate(939 1114)"><rect width="50" height="50" rx="11.500" fill="url(#dMl)"/><rect x="7.400" y="13.400" width="35.200" height="22.700" rx="2.200" fill="url(#dEn)"/><path d="M8 14.500 22.500 28C24 29.300 26 29.300 27.500 28L42 14.500" stroke="#8f99a6" stroke-width=".7" fill="none"/><path d="M8.300 35.300 19.500 25.500M41.700 35.300 30.500 25.500" stroke="#a3acb8" stroke-width=".6" fill="none"/></g>
<g transform="translate(1001 1114)"><rect width="50" height="50" rx="11.500" fill="url(#dPc)"/><g fill="none" stroke="#fff" stroke-width="1.800" stroke-linecap="round"><path d="M16.300 38.300A16.700 16.700 0 1 1 33.700 38.300"/><path d="M18.500 31.300A10.600 10.600 0 1 1 31.500 31.300"/></g><circle cx="25" cy="22.300" r="3.900" fill="#fff"/><path d="M21.400 31.200C21.400 28.900 23 27.900 25 27.900S28.600 28.900 28.600 31.200C28.600 35 28 40 27.400 42.600 27.100 43.900 26.200 44.400 25 44.400S22.900 43.900 22.600 42.600C22 40 21.400 35 21.400 31.200Z" fill="#fff"/></g>
<g transform="translate(1089.5 1114)"><rect width="50" height="50" rx="11.500" fill="url(#dRm)"/><circle cx="9.500" cy="12.7" r="4.100" fill="#fff" stroke="#1a7bfa" stroke-width=".85"/><circle cx="9.500" cy="12.7" r="2.700" fill="#1a7bfa"/><path d="M18.500 12.7H44.300" stroke="#c9c9ce" stroke-width=".8"/><circle cx="9.500" cy="25.4" r="4.100" fill="#fff" stroke="#fb3b30" stroke-width=".85"/><circle cx="9.500" cy="25.4" r="2.700" fill="#fb3b30"/><path d="M18.500 25.4H44.300" stroke="#c9c9ce" stroke-width=".8"/><circle cx="9.500" cy="37.6" r="4.100" fill="#fff" stroke="#fb950a" stroke-width=".85"/><circle cx="9.500" cy="37.6" r="2.700" fill="#fb950a"/><path d="M18.500 37.6H44.300" stroke="#c9c9ce" stroke-width=".8"/></g>
<g transform="translate(1151.5 1114)"><g clip-path="url(#cpI)"><rect width="50" height="50" fill="url(#dNb)"/><rect width="50" height="13" fill="url(#dNy)"/><path d="M0 15.200H50" stroke="#b9b6b0" stroke-width=".7" stroke-dasharray=".8 1"/><path d="M0 25.500H50M0 37.600H50" stroke="#d2d0d4" stroke-width=".6"/></g></g>
<g transform="translate(1241 1114)"><rect width="50" height="50" rx="11.500" fill="url(#dSp)"/><circle cx="25" cy="25" r="20.300" fill="none" stroke="#333" stroke-width="2.400" stroke-dasharray="1.100 1.026"/><circle cx="25" cy="25" r="19" fill="#4a4a4a"/><circle cx="25" cy="25" r="17" fill="#9b9b9b"/><circle cx="25" cy="25" r="15" fill="#555"/><circle cx="25" cy="25" r="14" fill="url(#dSg)"/><circle cx="25" cy="25" r="9.500" fill="none" stroke="#4a4a4a" stroke-width="3.500" opacity=".7"/><path d="M25 25 17.25 11.58" stroke="#b4b4b4" stroke-width="1.800" stroke-linecap="butt"/><path d="M25 25 40.44 26.35" stroke="#b4b4b4" stroke-width="1.800" stroke-linecap="butt"/><path d="M25 25 17.72 38.69" stroke="#b4b4b4" stroke-width="1.800" stroke-linecap="butt"/><circle cx="25" cy="25" r="1.500" fill="#bdbdbd"/></g>
<g transform="translate(1305 1109.6)"><path d="M0.600 8C0.600 5 10 2.300 22.600 2.300S44.600 5 44.600 8L38.500 48C38 52.500 30 53.800 22.600 53.800S7.200 52.500 6.700 48Z" fill="url(#dTr)" opacity=".96"/><ellipse cx="22.600" cy="8.300" rx="21.400" ry="5.300" fill="url(#dTi)"/><path d="M1.200 8.300C1.200 11.500 11 13.600 22.600 13.600S44 11.500 44 8.300" fill="none" stroke="#eef1f4" stroke-width=".9" opacity=".9"/></g>
<circle cx="592" cy="1170.900" r="1.900" fill="#15191c"/>
<circle cx="654" cy="1170.900" r="1.900" fill="#15191c"/>
<circle cx="716" cy="1170.900" r="1.900" fill="#15191c"/>
<circle cx="778" cy="1170.900" r="1.900" fill="#15191c"/>
<circle cx="840" cy="1170.900" r="1.900" fill="#15191c"/>
<circle cx="902" cy="1170.900" r="1.900" fill="#15191c"/>
<circle cx="964" cy="1170.900" r="1.900" fill="#15191c"/>
<circle cx="1026" cy="1170.900" r="1.900" fill="#15191c"/>
<circle cx="1114.5" cy="1170.900" r="1.900" fill="#15191c"/>
<circle cx="1176.5" cy="1170.900" r="1.900" fill="#15191c"/>
<circle cx="1266" cy="1170.900" r="1.900" fill="#15191c"/>
<circle cx="1328" cy="1170.900" r="1.900" fill="#15191c"/>
</svg>

</div>
</body>
</html>
